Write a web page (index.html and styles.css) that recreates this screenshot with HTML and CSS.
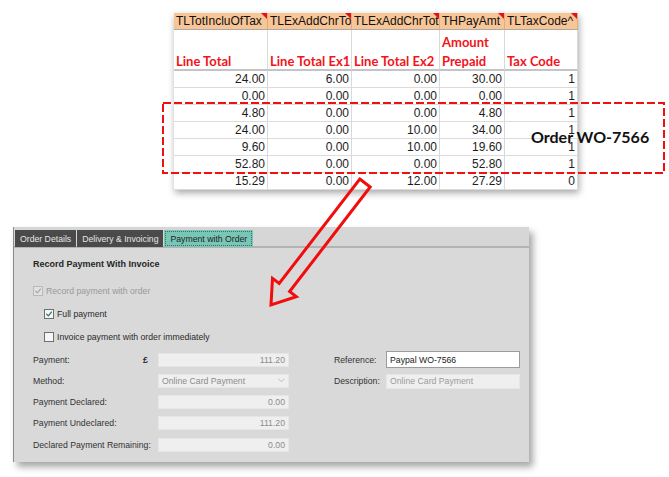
FILE: index.html
```html
<!DOCTYPE html>
<html lang="en">
<head>
<meta charset="utf-8">
<title>Payment with Order</title>
<link rel="stylesheet" href="styles.css">
</head>
<body>
<div class="page">

  <div class="sheet">
    <div class="cell head">TLTotIncluOfTax<i class="note"></i></div>
    <div class="cell head">TLExAddChrTot1<i class="note"></i></div>
    <div class="cell head">TLExAddChrTot2<i class="note"></i></div>
    <div class="cell head">THPayAmt<i class="note"></i></div>
    <div class="cell head">TLTaxCode^<i class="note"></i></div>

    <div class="cell label"><span>Line Total</span></div>
    <div class="cell label"><span>Line Total Ex1</span></div>
    <div class="cell label"><span>Line Total Ex2</span></div>
    <div class="cell label"><span>Amount<br>Prepaid</span></div>
    <div class="cell label"><span>Tax Code</span></div>

    <div class="cell num">24.00</div><div class="cell num">6.00</div><div class="cell num">0.00</div><div class="cell num">30.00</div><div class="cell num">1</div>
    <div class="cell num">0.00</div><div class="cell num">0.00</div><div class="cell num">0.00</div><div class="cell num">0.00</div><div class="cell num">1</div>
    <div class="cell num">4.80</div><div class="cell num">0.00</div><div class="cell num">0.00</div><div class="cell num">4.80</div><div class="cell num">1</div>
    <div class="cell num">24.00</div><div class="cell num">0.00</div><div class="cell num">10.00</div><div class="cell num">34.00</div><div class="cell num">1</div>
    <div class="cell num">9.60</div><div class="cell num">0.00</div><div class="cell num">10.00</div><div class="cell num">19.60</div><div class="cell num">1</div>
    <div class="cell num">52.80</div><div class="cell num">0.00</div><div class="cell num">0.00</div><div class="cell num">52.80</div><div class="cell num">1</div>
    <div class="cell num">15.29</div><div class="cell num">0.00</div><div class="cell num">12.00</div><div class="cell num">27.29</div><div class="cell num">0</div>
  </div>

  <section class="panel">
    <nav class="tabs">
      <span class="tab">Order Details</span>
      <span class="tab">Delivery &amp; Invoicing</span>
      <span class="tab active">Payment with Order</span>
    </nav>
    <div class="panel-body">
      <h2 class="title">Record Payment With Invoice</h2>

      <div class="check disabled">
        <span class="box"><svg viewBox="0 0 10 10"><polyline points="2,5.2 4.2,7.4 8,2.6"/></svg></span>
        Record payment with order
      </div>
      <div class="check sub on">
        <span class="box"><svg viewBox="0 0 10 10"><polyline points="2,5.2 4.2,7.4 8,2.6"/></svg></span>
        Full payment
      </div>
      <div class="check sub">
        <span class="box"></span>
        Invoice payment with order immediately
      </div>

      <div class="form">
        <span class="lbl">Payment:</span>
        <span class="cur">£</span>
        <span class="field num-field">111.20</span>
        <span></span>
        <span class="lbl">Reference:</span>
        <span class="field edit">Paypal WO-7566</span>

        <span class="lbl">Method:</span>
        <span></span>
        <span class="field select">Online Card Payment<svg class="chev" viewBox="0 0 8 5"><polyline points="0.5,0.5 4,4 7.5,0.5"/></svg></span>
        <span></span>
        <span class="lbl">Description:</span>
        <span class="field desc">Online Card Payment</span>

        <span class="lbl">Payment Declared:</span>
        <span></span>
        <span class="field num-field">0.00</span>
        <span></span><span></span><span></span>

        <span class="lbl">Payment Undeclared:</span>
        <span></span>
        <span class="field num-field">111.20</span>
        <span></span><span></span><span></span>

        <span class="lbl">Declared Payment Remaining:</span>
        <span></span>
        <span class="field num-field">0.00</span>
        <span></span><span></span><span></span>
      </div>
    </div>
  </section>

  <svg class="callout" width="669" height="477" viewBox="0 0 669 477">
    <rect class="dash" x="163" y="103" width="501" height="70"/>
    <polygon class="arrow" points="359.8,179 370.2,187 289.6,291.5 296.3,296.6 271,305 272.5,278.4 279.2,283.5"/>
  </svg>
  <div class="order-tag">Order WO-7566</div>

</div>
</body>
</html>
```

FILE: styles.css
```css
* { box-sizing: border-box; }

html, body {
  margin: 0;
  background: #ffffff;
}

.page {
  position: relative;
  width: 669px;
  height: 477px;
  overflow: hidden;
  padding-top: 13px;
  font-family: "Liberation Sans", Arial, sans-serif;
}

/* ---------- spreadsheet extract ---------- */
.sheet {
  margin-left: 174px;
  width: 404px;
  display: grid;
  grid-template-columns: 94px 84px 88px 65px 73px;
  grid-template-rows: 17px 41px repeat(7, 17px);
  background: #ffffff;
  box-shadow: 1px 3px 7px rgba(0, 0, 0, 0.35);
}

.cell {
  position: relative;
  border-right: 1px solid #d9d9d9;
  border-bottom: 1px solid #dcdcdc;
  white-space: nowrap;
  overflow: hidden;
}

.cell.head {
  background: #f8c597;
  border-right-color: #e0ad7f;
  border-bottom: 1px solid #a9a9a9;
  font-size: 12px;
  line-height: 16px;
  padding-left: 2px;
  color: #111;
}

.note {
  position: absolute;
  top: 0;
  right: 0;
  width: 0;
  height: 0;
  border-top: 6px solid #e8120c;
  border-left: 6px solid transparent;
}

.cell.label {
  display: flex;
  align-items: flex-end;
  overflow: visible;
  padding: 0 0 0 2px;
  font-family: Lato, "Open Sans", sans-serif;
  font-weight: 700;
  font-size: 13px;
  line-height: 19px;
  color: #f2141a;
  border-bottom: 2px solid #c4c4c4;
}

.cell.label span {
  margin-bottom: -2px;
}

.cell.num {
  text-align: right;
  padding-right: 2px;
  font-size: 12px;
  line-height: 16px;
  color: #1d1d1d;
}

/* ---------- payment dialog ---------- */
.panel {
  margin: 37px 0 0 13px;
  width: 516px;
  background: #d9d9d9;
  border-left: 1px solid #8c8c8c;
  box-shadow: 4px 5px 7px rgba(0, 0, 0, 0.35);
  font-size: 8.7px;
  color: #2e2e2e;
}

.tabs {
  display: flex;
  gap: 1px;
  height: 21px;
  padding: 3px 0 0 1px;
  background: #d6d6d6;
  border-bottom: 2px solid #b3b3b3;
}

.tab {
  display: flex;
  align-items: center;
  height: 17px;
  padding: 0 5px;
  background: #4a4a4a;
  color: #e6e6e6;
  font-size: 8.7px;
}

.tab.active {
  background: #78c6b5;
  color: #1f1f1f;
  outline: 1px dotted #3d6f64;
  outline-offset: -2px;
  padding: 0 6px;
}

.panel-body {
  padding: 10px 0 9px 19px;
}

.title {
  margin: 0;
  font-size: 9px;
  line-height: 12px;
  font-weight: 700;
  color: #262626;
}

.check {
  display: flex;
  align-items: center;
  gap: 3px;
  height: 12px;
  margin-top: 11px;
  color: #2a2a2a;
}

.check.disabled {
  margin-top: 15px;
  color: #9a9a9a;
}

.check.sub {
  padding-left: 11px;
}

.box {
  display: flex;
  width: 10px;
  height: 10px;
  background: #f6f6f6;
  border: 1px solid #6e6e6e;
}

.box svg {
  width: 100%;
  height: 100%;
  fill: none;
  stroke-width: 1.6;
  stroke-linecap: round;
  stroke-linejoin: round;
}

.check.on .box svg { stroke: #1d7f63; }

.check.disabled .box {
  background: #e2e2e2;
  border-color: #b9b9b9;
}

.check.disabled .box svg { stroke: #a8a8a8; }

.form {
  display: grid;
  grid-template-columns: 110px 15px 131px 45px 52px 134px;
  grid-auto-rows: 17px;
  row-gap: 4.25px;
  align-items: center;
  margin-top: 8px;
}

.lbl {
  color: #333;
  white-space: nowrap;
}

.cur {
  font-weight: 700;
  color: #333;
}

.field {
  display: flex;
  align-items: center;
  height: 14px;
  padding: 0 3px;
  background: #efefef;
  border: 1px solid #e6e6e6;
  color: #8c8c8c;
  white-space: nowrap;
}

.num-field { justify-content: flex-end; }

.select {
  justify-content: space-between;
}

.chev {
  width: 7px;
  height: 5px;
  fill: none;
  stroke: #b5b5b5;
  stroke-width: 1;
}

.field.edit {
  height: 17px;
  background: #ffffff;
  border: 1px solid #9c9c9c;
  color: #222;
}

.field.desc {
  height: 15px;
  margin-top: 1px;
  color: #9c9c9c;
}

/* ---------- annotations drawn over the sheet and dialog ---------- */
.callout {
  position: absolute;
  left: 0;
  top: 0;
  pointer-events: none;
}

.dash {
  fill: none;
  stroke: #f01010;
  stroke-width: 2;
  stroke-dasharray: 8 3;
}

.arrow {
  fill: none;
  stroke: #f20c0c;
  stroke-width: 3;
  stroke-linejoin: miter;
}

.order-tag {
  position: absolute;
  left: 531px;
  top: 127px;
  font-family: Lato, "Open Sans", sans-serif;
  font-weight: 700;
  font-size: 16px;
  line-height: 20px;
  color: #111;
}
```
